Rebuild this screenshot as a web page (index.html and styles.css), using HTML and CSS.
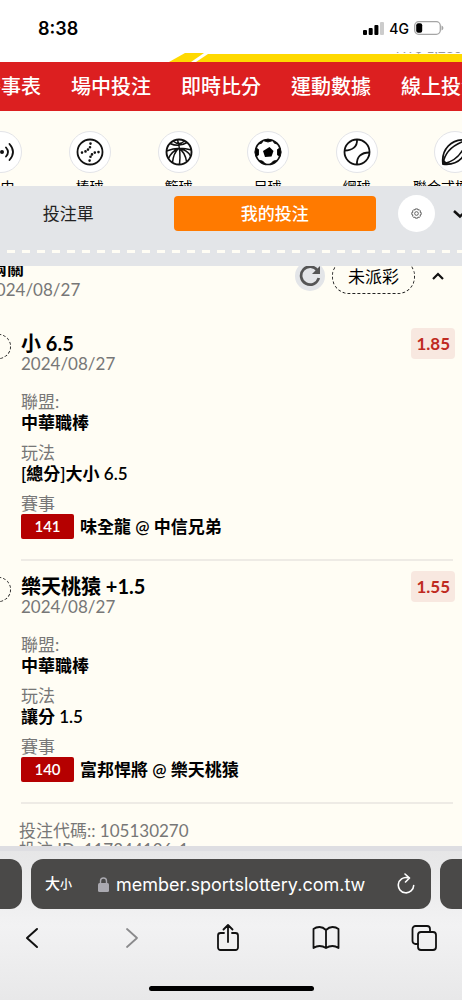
FILE: index.html
```html
<!DOCTYPE html>
<html lang="zh-Hant">
<head>
    <meta charset="UTF-8">
    <meta name="viewport" content="width=device-width, initial-scale=1.0">
    <title>我的投注</title>
    <link rel="stylesheet" href="styles.css">
</head>
<body>
    <div class="status-bar">
        <span class="clock">8:38</span>
        <div class="status-icons">
            <svg width="21" height="13" viewBox="0 0 21 13">
                <rect x="0" y="8" width="4" height="5" rx="1"/>
                <rect x="5.7" y="6" width="4" height="7" rx="1"/>
                <rect x="11.4" y="3" width="4" height="10" rx="1"/>
                <rect x="17" y="0" width="4" height="13" rx="1" fill="#ccc"/>
            </svg>
            <span class="network">4G</span>
            <svg width="30" height="14" viewBox="0 0 30 14">
                <rect x=".7" y=".7" width="25.6" height="12.6" rx="4" fill="none" stroke="#a5a5a5" stroke-width="1.3"/>
                <rect x="2.2" y="2.2" width="6" height="9.6" rx="2"/>
                <path d="M27.500 4.500C30 5.500 30 8.500 27.500 9.500z" fill="#a5a5a5"/>
            </svg>
        </div>
    </div>

    <header class="brand-strip">
        <span class="balance">NT$ 1,280</span>
        <div class="stripe-short"></div>
        <div class="stripe-long"></div>
    </header>

    <nav class="main-nav">
        <a href="#">賽事表</a>
        <a href="#">場中投注</a>
        <a href="#">即時比分</a>
        <a href="#">運動數據</a>
        <a href="#">線上投注</a>
    </nav>

    <div class="sports">
        <a class="sport" href="#">
            <span class="sport-icon">
                <svg width="28" height="28" viewBox="0 0 28 28" fill="none" stroke="#111" stroke-width="1.800" stroke-linecap="round">
                    <circle cx="15" cy="14" r="2" fill="#111" stroke="none"/>
                    <path d="M19 9.500q4 4.500 0 9M22.500 6q7 8 0 16M10 9.500q-4 4.500 0 9M6.500 6q-7 8 0 16"/>
                </svg>
            </span>
            場中
        </a>
        <a class="sport" href="#">
            <span class="sport-icon">
                <svg width="28" height="28" viewBox="0 0 28 28" fill="none" stroke="#111" stroke-width="1.800" stroke-linecap="round">
                    <circle cx="14" cy="14" r="12.500"/>
                    <path d="M14.500 5.500v.1M14 9.200v.1M12 11.500v.1M9.500 13.300v.1M6 14.500v.1M22.500 14v.1M18.800 14.500v.1M16 16.300v.1M14.500 18.700v.1M13.600 22.500v.1" stroke-width="2.600"/>
                </svg>
            </span>
            棒球
        </a>
        <a class="sport" href="#">
            <span class="sport-icon">
                <svg width="28" height="28" viewBox="0 0 28 28" fill="none" stroke="#111" stroke-width="1.500">
                    <circle cx="14" cy="14" r="12.500" stroke-width="1.900"/>
                    <path d="M12.500 1.600Q16 13 14.500 26.500M1.500 13Q13 8 26.500 12M5 5.500Q14 9.500 22 4.500M8 3q6 5 11.500 0M7.500 24.500Q8.500 15 13.500 10.500M3.500 20.500Q6.500 13.500 13.500 10.500M14 10.500Q20 14 21.500 23.500M14 10.500Q22.500 12 25.500 18"/>
                </svg>
            </span>
            籃球
        </a>
        <a class="sport" href="#">
            <span class="sport-icon">
                <svg width="28" height="28" viewBox="0 0 28 28">
                    <circle cx="14" cy="14" r="12.500" fill="none" stroke="#111" stroke-width="1.700"/>
                    <path d="M15.500 9l4 4-2 5.500-6.500.5-2-6z"/>
                    <path d="M9 2.500l5 1.500 5-1.500-5-1.300zM2 10l2.500 1.500v5.500L2 18.500Q0 14 2 10zM26 10l-2.500 1.500v5.500l2.500 1.500Q28 14 26 10zM5 22.500l3.500.5 3 3-3.500-.7zM23 22.500l-3.500.5-3 3 3.500-.7zM4.500 6l3-.7 1.500-2.300zM23.500 6l-3-.7-1.500-2.300z" stroke="#111"/>
                </svg>
            </span>
            足球
        </a>
        <a class="sport" href="#">
            <span class="sport-icon">
                <svg width="28" height="28" viewBox="0 0 28 28" fill="none" stroke="#111" stroke-width="1.800">
                    <circle cx="14" cy="14" r="12.500"/>
                    <path d="M14 1.500C14.500 8.500 9.500 12.500 1.700 12.500M26.300 14.500C18 14.500 13.500 19 14 26.500"/>
                </svg>
            </span>
            網球
        </a>
        <a class="sport" href="#">
            <span class="sport-icon">
                <svg width="28" height="28" viewBox="0 0 28 28" fill="none" stroke="#111" stroke-width="1.800">
                    <path d="M2 26C0 12 10 0 26 2 28 16 18 28 2 26z"/>
                    <path d="M2 26Q4 9 26 2M2 26Q20 22 26 2" stroke-width="1.500"/>
                    <path d="M2 21l5 5H2z" fill="#111" stroke="none"/>
                </svg>
            </span>
            聯合式橄欖球
        </a>
    </div>

    <div class="slip-header">
        <div class="slip-tabs">
            <button class="tab">投注單</button>
            <button class="tab active">我的投注</button>
            <button class="settings" aria-label="設定">
                <svg width="11" height="11" viewBox="0 0 24 24" fill="none" stroke="#555" stroke-width="2">
                    <circle cx="12" cy="12" r="4"/>
                    <path d="M9.500 2h5l.7 2.600 2.600-1.200 3 3.200-1.200 2.500 2.600.7v4.600l-2.600.8 1.200 2.600-3.100 3-2.500-1.200-.8 2.600H9.600l-.8-2.600-2.500 1.200-3.100-3 1.200-2.600L1.800 14.400V9.800l2.600-.7-1.200-2.500 3-3.200 2.600 1.200z"/>
                </svg>
            </button>
            <button class="collapse" aria-label="收合">
                <svg width="14" height="10" viewBox="0 0 14 10" fill="none" stroke="#111" stroke-width="2.500">
                    <path d="M1 2l6 5.500L13 2"/>
                </svg>
            </button>
        </div>
        <div class="perforation"></div>
    </div>

    <main class="bets">
        <div class="ticket-head">
            <div class="ticket-title">
                <h1>兩關</h1>
                <p class="date">2024/08/27</p>
            </div>
            <div class="ticket-actions">
                <button class="refresh" aria-label="更新">
                    <svg width="22" height="22" viewBox="0 0 22 22" fill="none" stroke="#555" stroke-width="2.700">
                        <path d="M18.500 5.500A9 9 0 1 0 19.800 13"/>
                        <path d="M21 1v8h-8z" fill="#555" stroke="none"/>
                    </svg>
                </button>
                <span class="state">未派彩</span>
                <button class="fold" aria-label="收合注單">
                    <svg width="12" height="8" viewBox="0 0 12 8" fill="none" stroke="#111" stroke-width="2.200">
                        <path d="M1 7l5-5 5 5"/>
                    </svg>
                </button>
            </div>
        </div>

        <section class="bet">
            <span class="bet-mark"></span>
            <div class="bet-head">
                <h2>小 6.5</h2>
                <span class="odds">1.85</span>
            </div>
            <p class="date">2024/08/27</p>
            <dl>
                <dt>聯盟:</dt>
                <dd>中華職棒</dd>
                <dt>玩法</dt>
                <dd>[總分]大小 6.5</dd>
                <dt>賽事</dt>
                <dd class="match"><span class="match-no">141</span>味全龍 @ 中信兄弟</dd>
            </dl>
        </section>

        <section class="bet">
            <span class="bet-mark"></span>
            <div class="bet-head">
                <h2>樂天桃猿 +1.5</h2>
                <span class="odds">1.55</span>
            </div>
            <p class="date">2024/08/27</p>
            <dl>
                <dt>聯盟:</dt>
                <dd>中華職棒</dd>
                <dt>玩法</dt>
                <dd>讓分 1.5</dd>
                <dt>賽事</dt>
                <dd class="match"><span class="match-no">140</span>富邦悍將 @ 樂天桃猿</dd>
            </dl>
        </section>

        <div class="ticket-codes">
            <p>投注代碼:: 105130270</p>
            <p>投注 ID: 117344126-1</p>
        </div>
    </main>

    <footer class="browser">
        <div class="address-row">
            <div class="side-tab"></div>
            <div class="address">
                <button class="text-size" aria-label="文字大小">大<small>小</small></button>
                <svg width="11" height="15" viewBox="0 0 11 15">
                    <rect x="0" y="6" width="11" height="9" rx="1.500" fill="#aaa9b0"/>
                    <path d="M2.500 7V4a3 3 0 0 1 6 0v3" fill="none" stroke="#aaa9b0" stroke-width="1.400"/>
                </svg>
                <input class="url" type="text" value="member.sportslottery.com.tw" aria-label="網址">
                <button class="reload" aria-label="重新載入">
                    <svg width="18" height="22" viewBox="0 0 18 22" fill="none" stroke="#fff" stroke-width="1.600" stroke-linecap="round" stroke-linejoin="round">
                        <path d="M10.500 4.600A7.700 7.700 0 1 0 16.700 12.500M8 1l4.500 4L8.500 9"/>
                    </svg>
                </button>
            </div>
            <div class="side-tab"></div>
        </div>
        <div class="toolbar">
            <button aria-label="上一頁">
                <svg width="28" height="28" viewBox="0 0 28 28"><path d="M19 5L9 14l10 9" stroke-width="2"/></svg>
            </button>
            <button class="disabled" aria-label="下一頁">
                <svg width="28" height="28" viewBox="0 0 28 28"><path d="M11 5l10 9-10 9"/></svg>
            </button>
            <button aria-label="分享">
                <svg width="28" height="28" viewBox="0 0 28 28"><path d="M10 9H6.500A2.500 2.500 0 0 0 4 11.500v12A2.500 2.500 0 0 0 6.500 26h15a2.500 2.500 0 0 0 2.500-2.500v-12A2.500 2.500 0 0 0 21.500 9H18M14 18V1M9.500 5.500L14 1l4.500 4.500"/></svg>
            </button>
            <button aria-label="書籤">
                <svg width="28" height="28" viewBox="0 0 28 28"><path d="M14 6Q11 3 7.500 3 4 3 1.500 5v19q3-2 6-2 3.500 0 6.500 2V6zM14 6q3-3 6.500-3Q24 3 26.500 5v19q-3-2-6-2-3.500 0-6.500 2"/></svg>
            </button>
            <button aria-label="分頁">
                <svg width="28" height="28" viewBox="0 0 28 28"><path d="M8 20H5.500A3 3 0 0 1 2.500 17V5a3 3 0 0 1 3-3H17a3 3 0 0 1 3 3v3"/><rect x="8" y="8" width="18" height="18" rx="3"/></svg>
            </button>
        </div>
        <div class="home-indicator"></div>
    </footer>
</body>
</html>
```

FILE: styles.css
```css
* {
    box-sizing: border-box;
}
body {
    display: flex;
    flex-direction: column;
    height: 100vh;
    margin: 0;
    overflow: hidden;
    background-color: #fffdf4;
    color: #000;
    font-family: Lato, "Noto Sans CJK TC", sans-serif;
    font-size: 17px;
    line-height: 21px;
}
h1, h2, p, dl, dd {
    margin: 0;
}
a {
    color: inherit;
    text-decoration: none;
}
button {
    display: flex;
    align-items: center;
    justify-content: center;
    padding: 0;
    border: none;
    background: none;
    color: inherit;
    font: inherit;
}
svg {
    display: block;
    flex: none;
}

/* phone status bar */
.status-bar {
    display: flex;
    flex: none;
    justify-content: space-between;
    align-items: center;
    height: 52px;
    padding: 4px 18px 0 38px;
    background-color: #fff;
    font-family: Inter, sans-serif;
}
.clock {
    font-size: 18px;
    font-weight: 600;
}
.status-icons {
    display: flex;
    align-items: center;
    gap: 5px;
}
.network {
    font-size: 14px;
    font-weight: 500;
}

/* site header */
.brand-strip {
    position: relative;
    display: flex;
    flex: none;
    align-items: flex-end;
    height: 10px;
    padding-left: 169px;
    overflow: hidden;
    background-color: #fff;
}
.balance {
    position: absolute;
    right: 0;
    bottom: 4px;
    color: #999;
    font-size: 14px;
}
.stripe-short {
    position: relative;
    width: 35px;
    height: 9px;
    background-color: #ffd900;
    clip-path: polygon(16px 0, 100% 0, 22px 100%, 0 100%);
}
.stripe-long {
    position: relative;
    flex: 1;
    height: 8px;
    margin-left: -8px;
    background-color: #ffd900;
    clip-path: polygon(12px 0, 100% 0, 100% 100%, 0 100%);
}
.main-nav {
    display: flex;
    flex: none;
    gap: 30px;
    margin-left: -19px;
    padding: 14px 0;
    background-color: #dc1f20;
    color: #fff;
    font-size: 20px;
    font-weight: 500;
    white-space: nowrap;
}
.sports {
    display: flex;
    flex: none;
    height: 75px;
    margin-left: -44px;
    padding-top: 20px;
    overflow: hidden;
    font-size: 14px;
    white-space: nowrap;
}
.sport {
    display: flex;
    flex: none;
    flex-direction: column;
    align-items: center;
    gap: 3px;
    min-width: 89px;
    padding: 0 12px;
}
.sport-icon {
    display: flex;
    flex: none;
    align-items: center;
    justify-content: center;
    width: 42px;
    height: 42px;
    border: 1px solid #e3e4e8;
    border-radius: 50%;
    background-color: #fff;
}

/* bet slip tabs */
.slip-header {
    flex: none;
    padding-top: 9px;
    background-color: #e3e5e8;
}
.slip-tabs {
    display: flex;
    align-items: center;
    gap: 4px;
    margin-left: -33px;
}
.tab {
    flex: 1;
    height: 35px;
    border-radius: 4px;
    color: #222;
}
.tab.active {
    background-color: #ff7a00;
    color: #fff;
    font-weight: 500;
}
.settings {
    width: 37px;
    height: 37px;
    margin: 0 14px 0 18px;
    border-radius: 50%;
    background-color: #fff;
}
.collapse {
    width: 9px;
    justify-content: flex-start;
}
.perforation {
    height: 3px;
    margin: 18px 0 13px 7px;
    background: repeating-linear-gradient(to right, #fffdf4 0 8px, transparent 8px 15px);
}

/* bets */
.bets {
    flex: 1;
    min-height: 0;
    overflow: hidden;
    border-bottom: 5px solid #dedee2;
}
.ticket-head {
    display: flex;
    height: 42px;
    margin: -8px 18px 0 -14px;
}
.ticket-title {
    flex: 1;
}
h1 {
    padding-left: 4px;
    font-size: 17px;
    font-weight: 700;
    line-height: 21px;
}
.date {
    color: #777;
    line-height: 21px;
}
.ticket-actions {
    display: flex;
    align-items: center;
    padding-bottom: 6px;
}
.refresh {
    width: 30px;
    height: 30px;
    border-radius: 50%;
    background-color: #e3e5e8;
}
.state {
    margin: 0 17px 0 7px;
    padding: 6px 15px;
    border: 1px dashed #222;
    border-radius: 17px;
}
.bet {
    position: relative;
    margin: 0 9px 0 21px;
    padding: 15px 0 20px;
    border-bottom: 2px solid #eeebe5;
}
.ticket-head + .bet {
    padding-top: 33px;
}
.bet-mark {
    position: absolute;
    left: -35px;
    bottom: 200px;
    width: 25px;
    height: 25px;
    border: 1px dashed #222;
    border-radius: 50%;
}
.bet-head {
    display: flex;
    justify-content: space-between;
    align-items: center;
    height: 20px;
    margin-right: -2px;
}
h2 {
    font-size: 20px;
    font-weight: 700;
}
.odds {
    padding: 5px;
    border-radius: 4px;
    background-color: #f8e8e0;
    color: #bf2a20;
    font-weight: 700;
}
dl {
    margin-top: 17px;
}
dt {
    color: #777;
}
dd {
    margin-bottom: 9px;
    font-weight: 600;
}
.match {
    display: flex;
    align-items: center;
    gap: 6px;
    margin-bottom: 0;
}
.match-no {
    width: 53px;
    padding: 2px 0;
    border-radius: 2px;
    background-color: #b50000;
    color: #fff;
    font-size: 15px;
    text-align: center;
}
.ticket-codes {
    padding: 17px 19px;
    color: #777;
    line-height: 19px;
}

/* browser chrome */
.browser {
    flex: none;
    padding-bottom: 9px;
    background: linear-gradient(#e6e6e7, #f2f2f3 50%, #e8e8e9);
}
.address-row {
    display: flex;
    gap: 9px;
    padding-top: 8px;
    overflow: hidden;
}
.side-tab {
    flex: none;
    width: 22px;
    background-color: #4a4948;
    border-radius: 0 12px 12px 0;
}
.side-tab:last-child {
    border-radius: 12px 0 0 12px;
}
.address {
    display: flex;
    flex: 1;
    align-items: center;
    min-width: 0;
    height: 50px;
    padding: 0 16px 0 14px;
    border-radius: 12px;
    background-color: #4a4948;
    color: #fff;
}
.text-size {
    align-items: baseline;
    margin-right: 26px;
    font-size: 15px;
    font-weight: 500;
}
.text-size small {
    font-size: 12px;
}
.url {
    flex: 1;
    min-width: 0;
    padding: 0 0 0 7px;
    border: none;
    background: none;
    color: inherit;
    font-family: Inter, sans-serif;
    font-size: 18px;
}
.toolbar {
    display: flex;
    justify-content: space-between;
    padding: 15px 24px 0 18px;
}
.toolbar svg {
    fill: none;
    stroke: #111;
    stroke-width: 1.8;
    stroke-linecap: round;
    stroke-linejoin: round;
}
.toolbar .disabled svg {
    stroke: #8a8a8c;
}
.home-indicator {
    width: 165px;
    height: 5px;
    margin: 34px auto 0;
    border-radius: 3px;
    background-color: #000;
}
```
